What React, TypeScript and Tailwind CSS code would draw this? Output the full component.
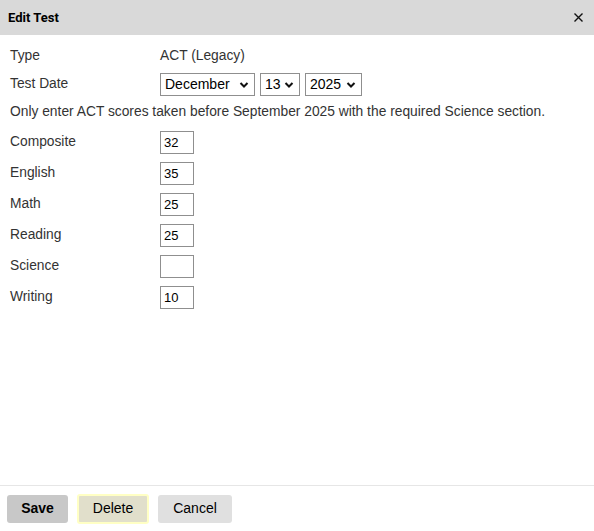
import React from "react";

const Row = ({ label, h = "h-[31px]", children }: { label: string; h?: string; children: React.ReactNode }) => (
  <div className={`flex items-center ${h}`}>
    <div className="w-[160px] pl-[10px]">{label}</div>
    <div className="flex items-center gap-[5px]">{children}</div>
  </div>
);

const ScoreInput = ({ value }: { value: string }) => (
  <input
    defaultValue={value}
    className="w-[34px] h-[23px] border border-[#8f8f8f] bg-white px-[3px] text-[13px] text-black outline-none"
  />
);

const Select = ({ value, options, w }: { value: string; options: string[]; w: string }) => (
  <div className={`relative h-[23px] border border-[#8f8f8f] bg-white ${w}`}>
    <select
      defaultValue={value}
      className="appearance-none w-full h-full bg-transparent pl-[4px] text-[14px] text-black outline-none"
    >
      {options.map((o) => (
        <option key={o}>{o}</option>
      ))}
    </select>
    <svg className="pointer-events-none absolute right-[5px] top-[7px]" width="10" height="8" viewBox="0 0 10 8">
      <path d="M1.5 2 L5 5.5 L8.5 2" stroke="#111" strokeWidth="2" fill="none" />
    </svg>
  </div>
);

export default function App() {
  return (
    <div className="w-[594px] h-[531px] bg-white flex flex-col text-[13.8px] text-[#333]" style={{ fontFamily: '"Liberation Sans", Arial, sans-serif' }}>
      <div className="h-[35px] bg-[#d9d9d9] flex items-center justify-between px-[8px] shrink-0">
        <span className="font-bold text-[13px] text-black" style={{ fontFamily: "Roboto, sans-serif" }}>Edit Test</span>
        <svg width="9" height="9" viewBox="0 0 9 9" className="mr-[3px]">
          <path d="M0.5 0.5 L8.5 8.5 M8.5 0.5 L0.5 8.5" stroke="#111" strokeWidth="1.4" />
        </svg>
      </div>
      <div className="flex-1 pt-[8px]">
        <Row label="Type" h="h-[27px]">ACT (Legacy)</Row>
        <Row label="Test Date" h="h-[28px]">
          <Select value="December" w="w-[95px]" options={["January", "February", "March", "April", "May", "June", "July", "August", "September", "October", "November", "December"]} />
          <Select value="13" w="w-[40px]" options={Array.from({ length: 31 }, (_, i) => String(i + 1))} />
          <Select value="2025" w="w-[57px]" options={["2023", "2024", "2025", "2026"]} />
        </Row>
        <div className="pl-[10px] h-[29px] flex items-center">
          Only enter ACT scores taken before September 2025 with the required Science section.
        </div>
        <Row label="Composite"><ScoreInput value="32" /></Row>
        <Row label="English"><ScoreInput value="35" /></Row>
        <Row label="Math"><ScoreInput value="25" /></Row>
        <Row label="Reading"><ScoreInput value="25" /></Row>
        <Row label="Science"><ScoreInput value="" /></Row>
        <Row label="Writing"><ScoreInput value="10" /></Row>
      </div>
      <div className="border-t border-[#e6e6e6] h-[46px] flex items-center gap-[9px] px-[7px] shrink-0">
        <button className="w-[61px] h-[28px] rounded-[3px] bg-[#c8c8c8] font-bold text-[14px] text-black">Save</button>
        <button className="w-[72px] h-[30px] rounded-[3px] bg-[#e1dfcb] border-2 border-[#ffffc4] text-[14px] text-black">Delete</button>
        <button className="w-[74px] h-[28px] rounded-[3px] bg-[#e0e0e0] text-[14px] text-black">Cancel</button>
      </div>
    </div>
  );
}
